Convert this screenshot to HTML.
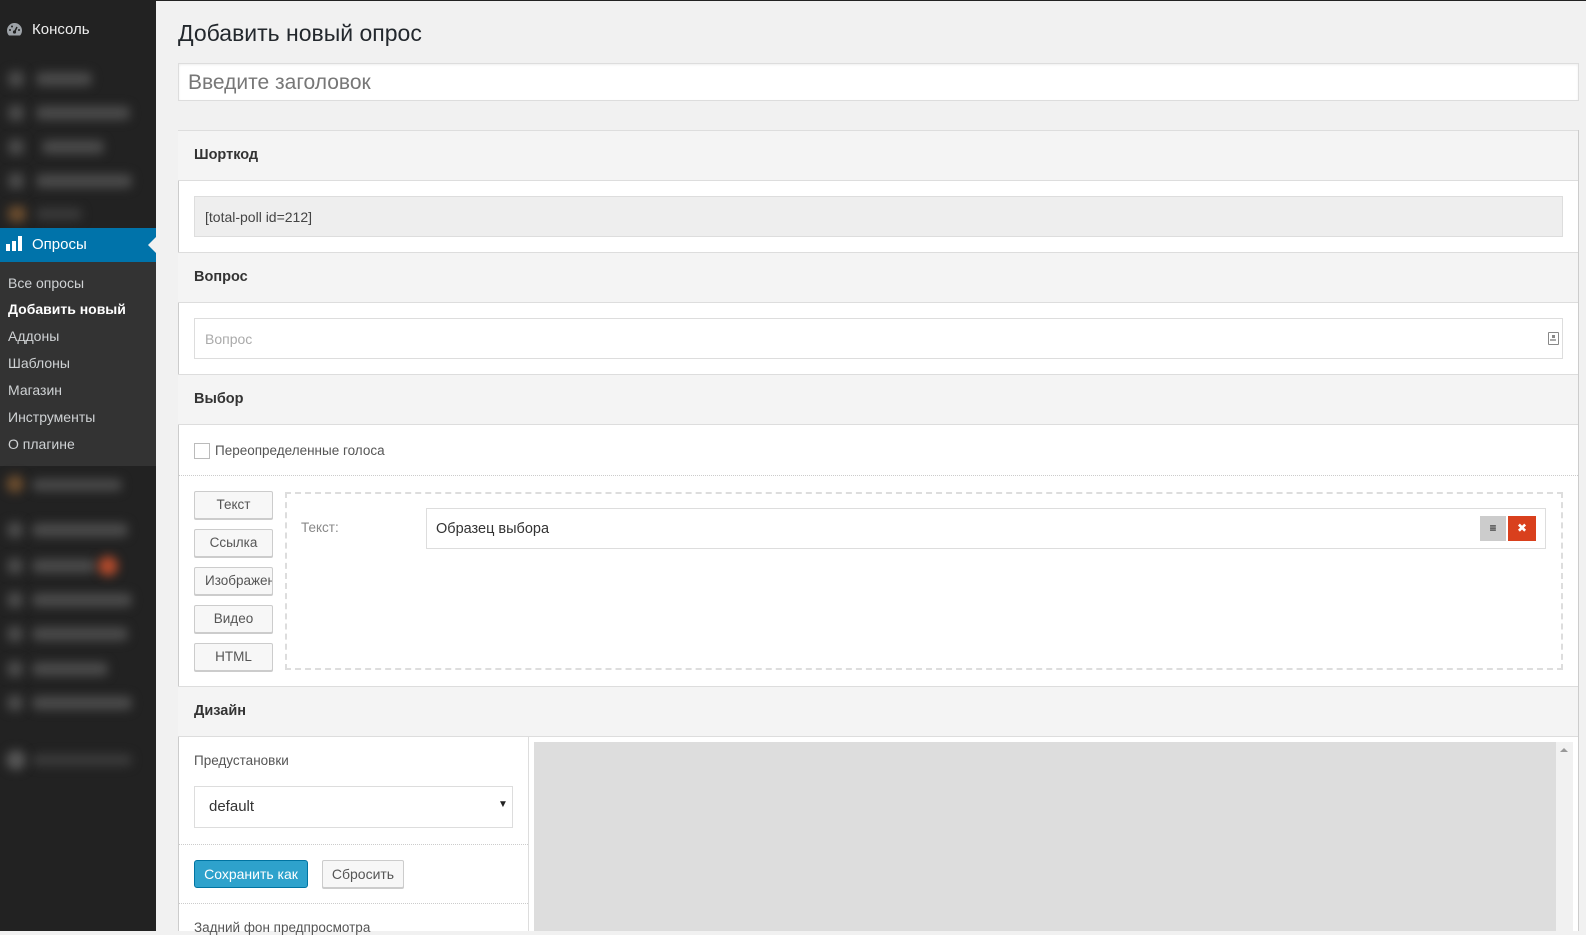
<!DOCTYPE html>
<html><head><meta charset="utf-8"><style>
*{box-sizing:border-box;margin:0;padding:0}
body{width:1586px;height:931px;overflow:hidden;background:#f1f1f1;font-family:"Liberation Sans","DejaVu Sans",sans-serif;color:#444;position:relative;font-size:13px}
.a{position:absolute}
#sb{left:0;top:0;width:156px;height:931px;background:#222}
.bl{position:absolute;filter:blur(5px);background:#4a4a4a;border-radius:5px}
.sub{color:#cfd2d4;font-size:14px;left:8px}
.hd{left:178px;width:1400px;height:51px;background:#f4f4f4;border-top:1px solid #ddd;border-bottom:1px solid #ddd}
.hd span{position:absolute;left:16px;top:16px;font-weight:bold;font-size:14.5px;color:#333}
.inp{background:#fff;border:1px solid #ddd}
.btn{background:#f7f7f7;border:1px solid #ccc;border-radius:2px;box-shadow:0 1px 0 #ccc;font-size:13.5px;color:#555;text-align:center;line-height:26px;overflow:hidden;white-space:nowrap}
</style></head><body>
<div class="a" style="left:0;top:0;width:1586px;height:1px;background:#222"></div>
<div id="sb" class="a">
 <svg class="a" style="left:6px;top:22px" width="17" height="15" viewBox="0 0 17 15"><path d="M8.5 1A7.5 7.5 0 0 0 1 8.5c0 2 .7 3.7 2 5h11c1.3-1.3 2-3 2-5A7.5 7.5 0 0 0 8.5 1z" fill="#9ea3a8"/><circle cx="8.5" cy="10" r="1.6" fill="#222"/><path d="M8.5 10L11 5" stroke="#222" stroke-width="1.5"/><circle cx="4" cy="8" r="1" fill="#222"/><circle cx="6" cy="4.5" r="1" fill="#222"/><circle cx="13" cy="8" r="1" fill="#222"/></svg>
 <div class="a" style="left:32px;top:21px;color:#eee;font-size:15px">Консоль</div>
 <div class="bl" style="left:8px;top:71px;width:16px;height:16px"></div><div class="bl" style="left:36px;top:72px;width:56px;height:14px"></div>
 <div class="bl" style="left:8px;top:105px;width:16px;height:16px"></div><div class="bl" style="left:36px;top:106px;width:94px;height:14px"></div>
 <div class="bl" style="left:8px;top:139px;width:16px;height:16px"></div><div class="bl" style="left:42px;top:140px;width:62px;height:14px"></div>
 <div class="bl" style="left:8px;top:173px;width:16px;height:16px"></div><div class="bl" style="left:36px;top:174px;width:96px;height:14px"></div>
 <div class="bl" style="left:8px;top:206px;width:18px;height:16px;background:#6a4c2e"></div><div class="bl" style="left:36px;top:208px;width:46px;height:12px;background:#3a3a3a"></div>
 <div class="a" style="left:0;top:228px;width:156px;height:34px;background:#0073aa"></div>
 <svg class="a" style="left:6px;top:236px" width="17" height="15"><rect x="0" y="8" width="4" height="7" fill="#fff"/><rect x="6" y="5" width="4" height="10" fill="#fff"/><rect x="12" y="0" width="4" height="15" fill="#fff"/></svg>
 <div class="a" style="left:32px;top:236px;color:#fff;font-size:15px">Опросы</div>
 <div class="a" style="left:148px;top:237px;width:0;height:0;border-top:8px solid transparent;border-bottom:8px solid transparent;border-right:8px solid #f1f1f1"></div>
 <div class="a" style="left:0;top:262px;width:156px;height:204px;background:#333"></div>
 <div class="a sub" style="top:275px">Все опросы</div>
 <div class="a sub" style="top:301px;color:#fff;font-weight:bold">Добавить новый</div>
 <div class="a sub" style="top:328px">Аддоны</div>
 <div class="a sub" style="top:355px">Шаблоны</div>
 <div class="a sub" style="top:382px">Магазин</div>
 <div class="a sub" style="top:409px">Инструменты</div>
 <div class="a sub" style="top:436px">О плагине</div>
 <div class="bl" style="left:6px;top:475px;width:18px;height:18px;background:#6a4c2e;border-radius:9px"></div><div class="bl" style="left:32px;top:479px;width:90px;height:12px"></div>
 <div class="bl" style="left:7px;top:522px;width:16px;height:16px"></div><div class="bl" style="left:32px;top:523px;width:96px;height:14px"></div>
 <div class="bl" style="left:7px;top:558px;width:16px;height:16px"></div><div class="bl" style="left:32px;top:559px;width:64px;height:14px"></div><div class="bl" style="left:98px;top:556px;width:20px;height:20px;background:#b04a2c;border-radius:10px"></div>
 <div class="bl" style="left:7px;top:592px;width:16px;height:16px"></div><div class="bl" style="left:32px;top:593px;width:100px;height:14px"></div>
 <div class="bl" style="left:7px;top:626px;width:16px;height:16px"></div><div class="bl" style="left:32px;top:627px;width:96px;height:14px"></div>
 <div class="bl" style="left:7px;top:661px;width:16px;height:16px"></div><div class="bl" style="left:32px;top:662px;width:76px;height:14px"></div>
 <div class="bl" style="left:7px;top:695px;width:16px;height:16px"></div><div class="bl" style="left:32px;top:696px;width:100px;height:14px"></div>
 <div class="bl" style="left:6px;top:750px;width:20px;height:20px;border-radius:10px;background:#555"></div><div class="bl" style="left:32px;top:754px;width:100px;height:12px;background:#3a3a3a"></div>
</div>

<div class="a" style="left:178px;top:20px;font-size:23px;color:#23282d">Добавить новый опрос</div>
<div class="a inp" style="left:178px;top:63px;width:1401px;height:38px;box-shadow:inset 0 1px 2px rgba(0,0,0,.07)"></div>
<div class="a" style="left:188px;top:71px;font-size:21px;color:#777">Введите заголовок</div>

<div class="a" style="left:178px;top:130px;width:1401px;height:801px;background:#fff;border:1px solid #ccc;border-bottom:none"></div>
<div class="a hd" style="top:130px"><span>Шорткод</span></div>
<div class="a" style="left:194px;top:196px;width:1369px;height:41px;background:#eee;border:1px solid #ddd"></div>
<div class="a" style="left:205px;top:209px;font-size:14px;color:#444">[total-poll id=212]</div>
<div class="a hd" style="top:252px"><span>Вопрос</span></div>
<div class="a inp" style="left:194px;top:318px;width:1369px;height:41px"></div>
<div class="a" style="left:205px;top:331px;font-size:14px;color:#aaa">Вопрос</div>
<div class="a" style="left:1548px;top:332px;width:11px;height:13px;border:1.5px solid #888;border-radius:1px"><div class="a" style="left:3px;top:2px;width:3px;height:3px;background:#888"></div><div class="a" style="left:1px;top:6px;width:6px;height:2px;background:#aaa"></div></div>
<div class="a hd" style="top:374px"><span>Выбор</span></div>
<div class="a" style="left:194px;top:443px;width:16px;height:16px;border:1px solid #bbb;background:#fff"></div>
<div class="a" style="left:215px;top:443px;font-size:13.5px;color:#555">Переопределенные голоса</div>
<div class="a" style="left:179px;top:475px;width:1399px;border-top:1px dotted #ccc"></div>

<div class="a btn" style="left:194px;top:491px;width:79px;height:28px">Текст</div>
<div class="a btn" style="left:194px;top:529px;width:79px;height:28px">Ссылка</div>
<div class="a btn" style="left:194px;top:567px;width:79px;height:28px;text-align:left;padding-left:10px">Изображение</div>
<div class="a btn" style="left:194px;top:605px;width:79px;height:28px">Видео</div>
<div class="a btn" style="left:194px;top:643px;width:79px;height:28px">HTML</div>
<div class="a" style="left:285px;top:492px;width:1278px;height:178px;border:2px dashed #ddd"></div>
<div class="a" style="left:301px;top:520px;font-size:13.5px;color:#888">Текст:</div>
<div class="a inp" style="left:426px;top:508px;width:1120px;height:41px"></div>
<div class="a" style="left:436px;top:521px;font-size:14.5px;color:#333">Образец выбора</div>
<div class="a" style="left:1480px;top:516px;width:26px;height:25px;background:#ccc;color:#000;text-align:center;font-size:12px;line-height:25px">≡</div>
<div class="a" style="left:1508px;top:516px;width:28px;height:25px;background:#d9401d;color:#fff;text-align:center;font-size:12px;font-weight:bold;line-height:25px">✖</div>

<div class="a hd" style="top:686px"><span>Дизайн</span></div>
<div class="a" style="left:528px;top:737px;width:1px;height:194px;background:#ddd"></div>
<div class="a" style="left:194px;top:753px;font-size:13.5px;color:#555">Предустановки</div>
<div class="a inp" style="left:194px;top:786px;width:319px;height:42px"></div>
<div class="a" style="left:209px;top:798px;font-size:15px;color:#333">default</div>
<div class="a" style="left:498px;top:799px;font-size:10px;color:#222">▼</div>
<div class="a" style="left:179px;top:844px;width:349px;border-top:1px dotted #ccc"></div>
<div class="a" style="left:194px;top:860px;width:114px;height:28px;background:#2ea2cc;border:1px solid #0074a2;border-radius:3px;color:#fff;font-size:14px;text-align:center;line-height:26px">Сохранить как</div>
<div class="a btn" style="left:322px;top:860px;width:82px;height:28px;font-size:14px">Сбросить</div>
<div class="a" style="left:179px;top:903px;width:349px;border-top:1px dotted #ccc"></div>
<div class="a" style="left:194px;top:920px;font-size:13.5px;color:#555">Задний фон предпросмотра</div>
<div class="a" style="left:534px;top:742px;width:1022px;height:189px;background:#ddd"></div>
<div class="a" style="left:1556px;top:742px;width:17px;height:189px;background:#f1f1f1"></div>
<div class="a" style="left:1560px;top:748px;width:0;height:0;border-left:4px solid transparent;border-right:4px solid transparent;border-bottom:4px solid #999"></div>
</body></html>
